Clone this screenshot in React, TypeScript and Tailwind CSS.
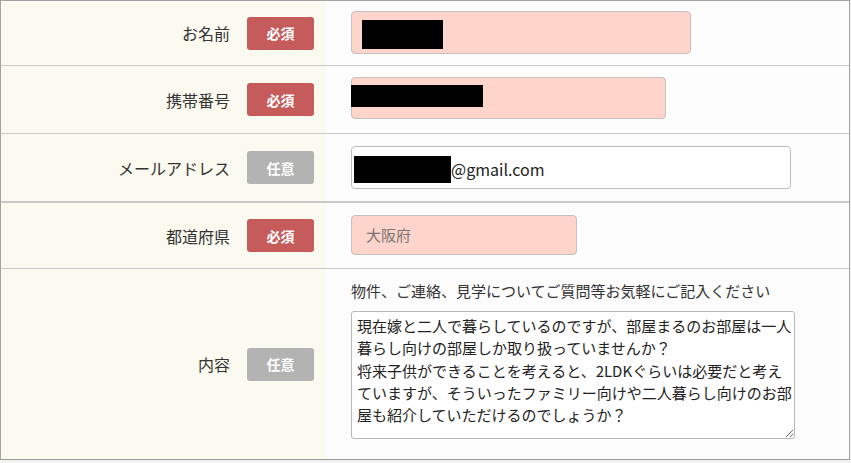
import React from "react";

const font = { fontFamily: '"Noto Sans CJK JP", "Noto Sans", sans-serif' };

function Badge({ required }: { required: boolean }) {
  return (
    <span
      className={`flex h-[33px] w-[67px] items-center justify-center rounded-[3px] text-[14px] font-bold leading-none text-white ${
        required ? "bg-[#c55c5b]" : "bg-[#b3b3b3]"
      }`}
    >
      {required ? "必須" : "任意"}
    </span>
  );
}

function Row({
  label,
  required,
  height,
  border = "border-b border-[#c9c9c9]",
  children,
}: {
  label: string;
  required: boolean;
  height: string;
  border?: string;
  children: React.ReactNode;
}) {
  return (
    <div className={`flex ${height} ${border}`}>
      {/* label column */}
      <div className="flex w-[325px] shrink-0 items-center justify-end bg-[#fbfaf0] pr-[12px]">
        <span className="mr-[17px] text-[16px] text-[#333]">{label}</span>
        <Badge required={required} />
      </div>
      {/* field column */}
      <div className="flex flex-1 bg-[#fcfcfc] pl-[25px]">{children}</div>
    </div>
  );
}

export default function App() {
  const message =
    "現在嫁と二人で暮らしているのですが、部屋まるのお部屋は一人\n暮らし向けの部屋しか取り扱っていませんか？\n将来子供ができることを考えると、2LDKぐらいは必要だと考え\nていますが、そういったファミリー向けや二人暮らし向けのお部\n屋も紹介していただけるのでしょうか？";

  return (
    <div className="h-[463px] w-[851px] bg-[#f2f2f2]" style={font}>
      <div className="w-[850px] border border-[#a3a3a3] border-b-[#9a9a9a]">
        <Row label="お名前" required height="h-[65px]">
          <div className="mt-[10px] flex h-[43px] w-[340px] items-start rounded-[4px] border border-[#c2c2c2] bg-[#ffd4ca] pl-[10px] pt-[8px]">
            <div className="h-[29px] w-[81px] bg-black" />
          </div>
        </Row>

        <Row label="携帯番号" required height="h-[68px]">
          <div className="mt-[11px] flex h-[42px] w-[315px] items-start rounded-[4px] border border-[#c2c2c2] bg-[#ffd4ca] pt-[7px]">
            <div className="-ml-px h-[22px] w-[132px] bg-black" />
          </div>
        </Row>

        <Row label="メールアドレス" required={false} height="h-[69px]" border="border-b-2 border-[#c9c9c9]">
          <div className="mt-[12px] flex h-[43px] w-[440px] items-start rounded-[4px] border border-[#bdbdbd] bg-white pl-[2px] pt-[9px]">
            <div className="h-[27px] w-[97px] bg-black" />
            <span className="mt-[1px] text-[16px] leading-[24px] text-[#222]">@gmail.com</span>
          </div>
        </Row>

        <Row label="都道府県" required height="h-[66px]">
          <div className="mt-[12px] flex h-[40px] w-[226px] items-center rounded-[4px] border border-[#c2c2c2] bg-[#ffd4ca] pl-[14px] text-[15px] text-[#777]">
            大阪府
          </div>
        </Row>

        <Row label="内容" required={false} height="h-[190px]" border="">
          <div className="flex flex-col pt-[11px]">
            <p className="text-[15px] leading-[22px] text-[#333]">
              物件、ご連絡、見学についてご質問等お気軽にご記入ください
            </p>
            <textarea
              readOnly
              defaultValue={message}
              className="mt-[9px] h-[128px] w-[444px] resize rounded-[3px] border border-[#b8b8b8] bg-white pl-[5px] pr-px pt-[3px] text-[15px] leading-[22.3px] text-[#222] outline-none"
              style={font}
            />
          </div>
        </Row>
      </div>
    </div>
  );
}
